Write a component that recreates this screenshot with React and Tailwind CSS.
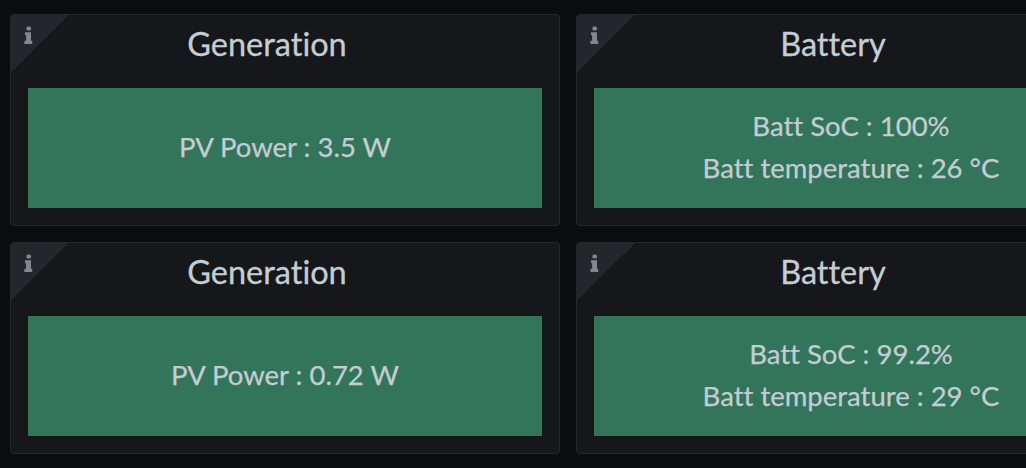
import React from 'react';

const panels = [
  { title: 'Generation', lines: ['PV Power : 3.5 W'] },
  { title: 'Battery', lines: ['Batt SoC : 100%', 'Batt temperature : 26 °C'] },
  { title: 'Generation', lines: ['PV Power : 0.72 W'] },
  { title: 'Battery', lines: ['Batt SoC : 99.2%', 'Batt temperature : 29 °C'] },
];

const InfoIcon = () => (
  <svg className="absolute left-[13px] top-[11px]" width="9" height="18" viewBox="0 0 9 18" fill="#85858a">
    <rect x="2.4" y="0.5" width="4.6" height="4" rx="1.6" />
    <path d="M1 6.2h6v8.6h1.2V18H.4v-3.2h1.7V9.2H1z" />
  </svg>
);

const Panel = ({ title, lines }) => (
  <div className="relative flex h-[212px] w-[550px] shrink-0 flex-col rounded-[4px] border border-[#26282c] bg-[#15171b]">
    <div className="absolute left-0 top-0 h-[58px] w-[58px] rounded-tl-[4px] bg-[linear-gradient(135deg,#25262b_50%,transparent_50%)]" />
    <InfoIcon />
    <div className="relative flex h-[73px] items-start justify-center pr-[36px] pt-[10px] text-[32.5px] leading-[38px] text-[#c4ccd4] [-webkit-text-stroke:0.3px_#c4ccd4]">
      {title}
    </div>
    <div className="mx-[17px] flex h-[120px] flex-col items-center justify-center bg-[#33755a] pb-[2px] text-[27.5px] leading-[42px] text-[#c4ccd4] [-webkit-text-stroke:0.25px_#c4ccd4]">
      {lines.map((line) => (
        <div key={line}>{line}</div>
      ))}
    </div>
  </div>
);

export default function App() {
  return (
    <div className="h-[468px] w-[1026px] overflow-hidden bg-[#0b0c0e] pl-[10px] pt-[14px] font-['Lato',sans-serif] [font-variant-ligatures:none]">
      <div className="grid w-[1116px] grid-cols-[550px_550px] gap-x-[16px] gap-y-[16px]">
        {panels.map((panel, i) => (
          <Panel key={i} title={panel.title} lines={panel.lines} />
        ))}
      </div>
    </div>
  );
}
